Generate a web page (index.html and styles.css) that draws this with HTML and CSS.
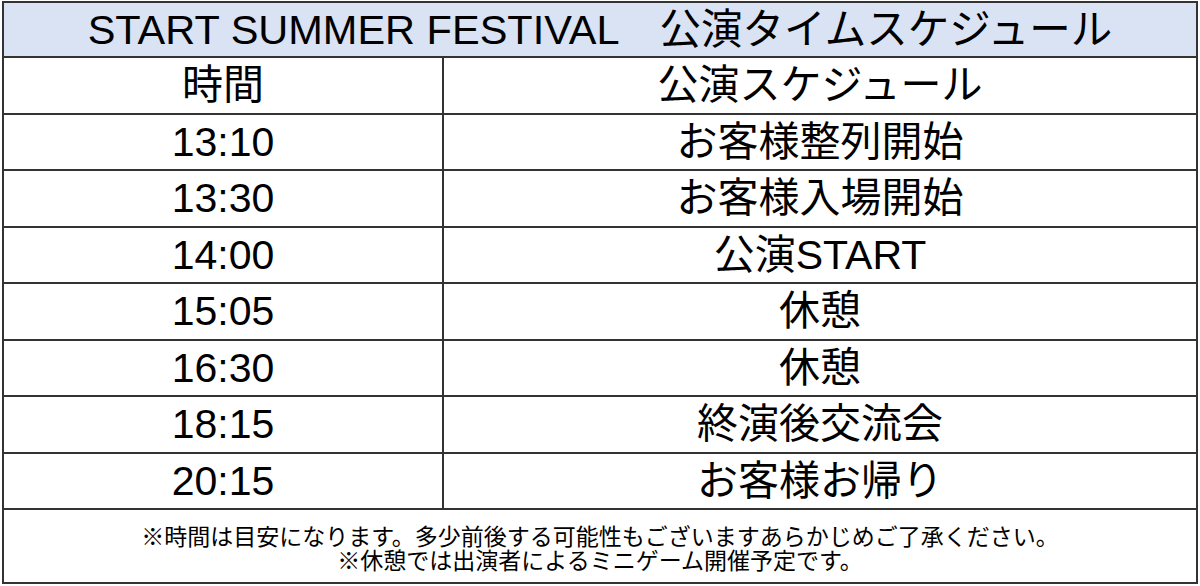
FILE: index.html
```html
<!DOCTYPE html>
<html lang="ja">
<head>
<meta charset="utf-8">
<title>START SUMMER FESTIVAL 公演タイムスケジュール</title>
<link rel="stylesheet" href="styles.css">
</head>
<body>
<div class="sheet">
  <div class="title">START SUMMER FESTIVAL　公演タイムスケジュール</div>
  <div class="row"><div class="cell time">時間</div><div class="cell">公演スケジュール</div></div>
  <div class="row"><div class="cell time">13:10</div><div class="cell">お客様整列開始</div></div>
  <div class="row"><div class="cell time">13:30</div><div class="cell">お客様入場開始</div></div>
  <div class="row"><div class="cell time">14:00</div><div class="cell">公演START</div></div>
  <div class="row"><div class="cell time">15:05</div><div class="cell">休憩</div></div>
  <div class="row"><div class="cell time">16:30</div><div class="cell">休憩</div></div>
  <div class="row"><div class="cell time">18:15</div><div class="cell">終演後交流会</div></div>
  <div class="row"><div class="cell time">20:15</div><div class="cell">お客様お帰り</div></div>
  <div class="note">
    <p>※時間は目安になります。多少前後する可能性もございますあらかじめご了承ください。</p>
    <p>※休憩では出演者によるミニゲーム開催予定です。</p>
  </div>
</div>
</body>
</html>
```

FILE: styles.css
```css
* { box-sizing: border-box; }
html, body { margin: 0; padding: 0; background: #ffffff; }
body {
  font-family: "Liberation Sans", "Noto Sans CJK JP", sans-serif;
  color: #000;
}
.sheet {
  margin: 1px 0 0 2px;
  width: 1196px;
  height: 583px;
  border: 2px solid #333333;
  display: flex;
  flex-direction: column;
}
.title {
  height: 55px;
  background: #dae3f3;
  border-bottom: 2px solid #333333;
  font-size: 41.5px;
  line-height: 53px;
  text-align: center;
  white-space: nowrap;
}
.row {
  height: 56.5px;
  display: grid;
  grid-template-columns: 440px 1fr;
  border-bottom: 2px solid #333333;
}
.cell {
  font-size: 41px;
  line-height: 54px;
  text-align: center;
  white-space: nowrap;
}
.cell.time { border-right: 2px solid #333333; }
.note {
  flex: 1;
  padding-top: 15px;
  text-align: center;
  font-size: 23px;
  line-height: 24px;
}
.note p { margin: 0; }
```
